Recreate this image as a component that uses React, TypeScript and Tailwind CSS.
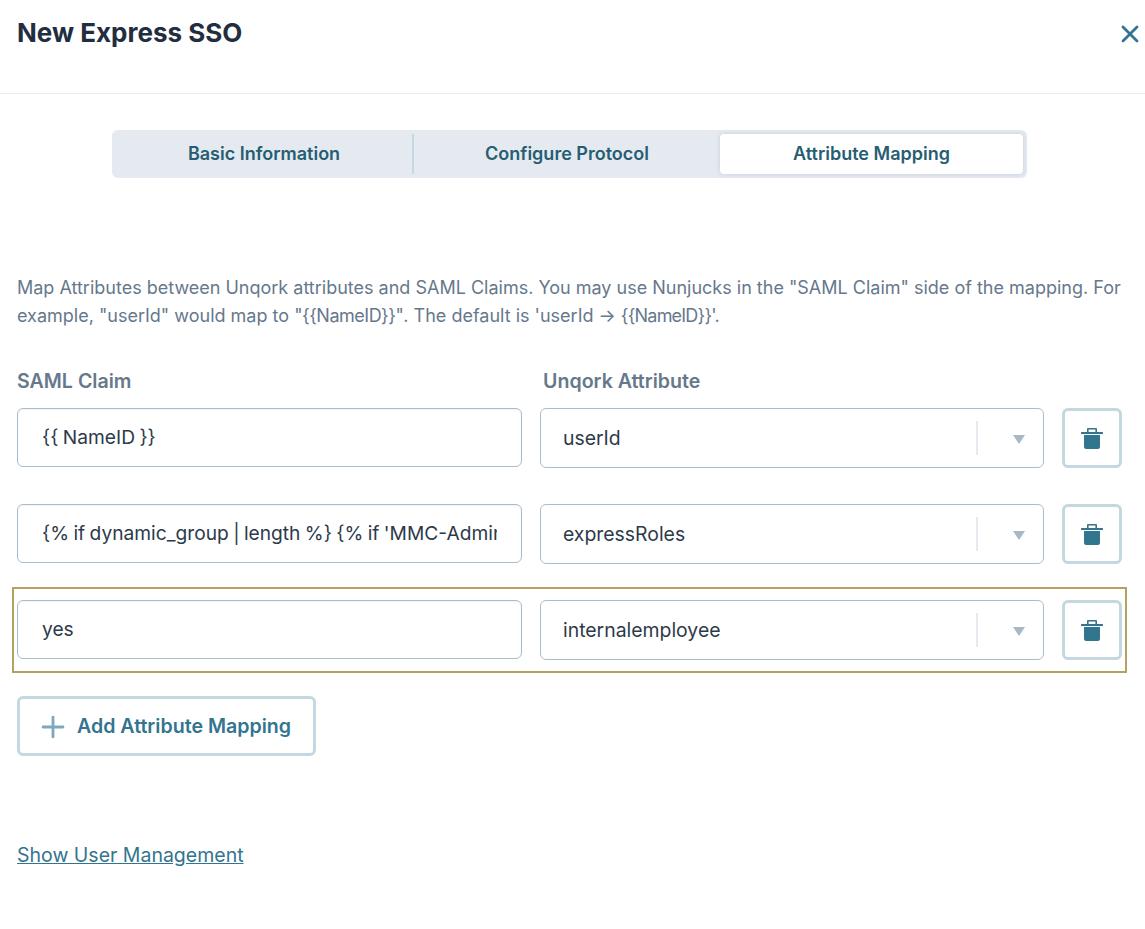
import { X, Plus } from "lucide-react"

const rows = [
  { claim: "{{ NameID }}", attr: "userId" },
  { claim: "{% if dynamic_group | length %} {% if 'MMC-Admin' in dynamic_group %}", attr: "expressRoles" },
  { claim: "yes", attr: "internalemployee" },
]

const TrashIcon = () => (
  <svg width="22" height="24" viewBox="0 0 22 24" fill="#33748f">
    <path d="M6 6.5V3.2C6 2.5 6.5 2 7.2 2h7.6c.7 0 1.2.5 1.2 1.2v3.3h-1.6V3.6H7.6v2.9z" />
    <rect x="0" y="6" width="22" height="2" rx="0.5" />
    <path d="M3 9h16v11.7c0 1.3-.9 2.3-2.2 2.3H5.2C3.9 23 3 22 3 20.7z" />
  </svg>
)

const MappingRow = ({ claim, attr, active }: { claim: string; attr: string; active?: boolean }) => (
  <div className={active ? "-mx-[5px] -my-[13px] flex gap-[18px] border-2 border-[#b5a263] px-[3px] py-[11px]" : "flex gap-[18px]"}>
    <div className="flex h-[59px] w-[505px] items-center rounded-md border border-[#a9bccd] bg-white pl-6 pr-6 shadow-[inset_0_1px_2px_rgba(30,41,59,0.06)]">
      <span className="overflow-hidden whitespace-nowrap text-[19.2px] text-[#2d3a4a] [word-spacing:-1px]">{claim}</span>
    </div>
    <div className="flex h-[60px] w-[504px] items-center rounded-md border border-[#a9bccd] bg-white pl-[22px]">
      <span className="flex-1 pt-0.5 text-[19.4px] text-[#2d3a4a]">{attr}</span>
      <div className="h-[34px] w-0.5 bg-[#e5eaf0]" />
      <div className="ml-[35px] mr-[18px] mt-[3px] h-0 w-0 border-x-[6px] border-t-[9px] border-x-transparent border-t-[#a9b8c6]" />
    </div>
    <button className="flex h-[60px] w-[60px] items-center justify-center rounded-md border-[3px] border-[#c4d8e1] bg-white">
      <TrashIcon />
    </button>
  </div>
)

export default function App() {
  return (
    <div className="h-[929px] w-[1145px] overflow-hidden bg-white font-['Inter',sans-serif]">
      {/* Header */}
      <div className="flex h-[94px] items-start justify-between border-b border-[#e8ebef] pl-[17px] pr-px pt-[15px]">
        <h1 className="font-['Inter',sans-serif] text-[26px] font-bold leading-9 text-[#222e3f]">New Express SSO</h1>
        <X className="mt-[5px] h-[28px] w-[28px] text-[#33748f]" strokeWidth={2.4} />
      </div>

      {/* Tabs */}
      <div className="ml-[112px] mt-9 flex h-12 w-[915px] items-center rounded-md bg-[#e5eaf1] p-1 text-[18px] font-semibold text-[#265d73]">
        <div className="flex h-10 w-[298px] items-center justify-center border-r-2 border-[#c4d8e1] pb-0.5">Basic Information</div>
        <div className="flex h-10 w-[306px] items-center justify-center pb-0.5">Configure Protocol</div>
        <div className="flex h-10 w-[303px] items-center justify-center rounded bg-white pb-0.5 shadow-[0_0_4px_rgba(100,116,139,0.25)]">Attribute Mapping</div>
      </div>

      <div className="px-[17px]">
        <p className="mt-[96px] text-lg leading-7 text-[#66788c]">
          Map Attributes between Unqork attributes and SAML Claims. You may use Nunjucks in the "SAML Claim" side of the mapping. For example, "userId" would map to{" "}
          <span className="tracking-[-0.5px]">"{"{{NameID}}"}"</span>. The default is 'userId → <span className="tracking-[-0.8px]">{"{{NameID}}"}'.</span>
        </p>

        <div className="mt-[37px] flex text-[19.6px] font-semibold leading-7 text-[#66788c]">
          <span className="w-[526px]">SAML Claim</span>
          <span>Unqork Attribute</span>
        </div>

        <div className="mt-[13px] flex w-[1105px] flex-col gap-9">
          {rows.map((row, i) => (
            <MappingRow key={row.attr} claim={row.claim} attr={row.attr} active={i === 2} />
          ))}
        </div>

        <button className="mt-[36px] flex h-[60px] w-[299px] items-center gap-[7px] rounded-md border-[3px] border-[#c4d8e1] bg-white pl-4 pt-0.5 text-[19.6px] font-semibold text-[#33748f]">
          <Plus className="h-[34px] w-[34px] text-[#7fa9bb]" strokeWidth={2} />
          Add Attribute Mapping
        </button>

        <a className="mt-[85px] block text-[19.5px] leading-7 text-[#33748f] underline">Show User Management</a>
      </div>
    </div>
  )
}
